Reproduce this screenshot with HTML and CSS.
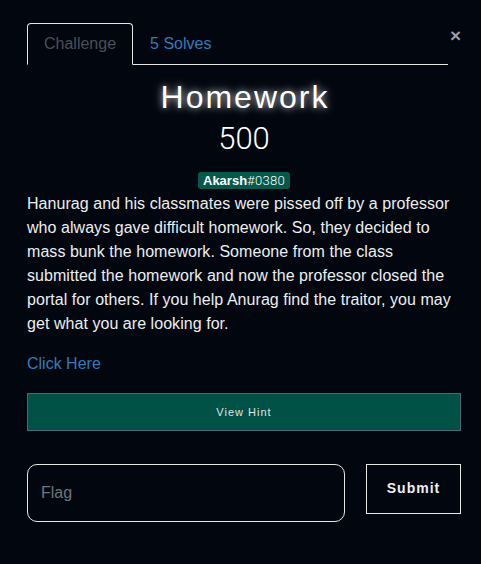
FILE: index.html
```html
<!DOCTYPE html>
<html>
<head>
<meta charset="utf-8">
<link rel="stylesheet" href="styles.css">
</head>
<body>
<div class="modal">
  <div class="head">
    <ul class="tabs">
      <li class="tab active">Challenge</li>
      <li class="tab link">5 Solves</li>
    </ul>
    <span class="close">×</span>
  </div>
  <h3 class="name">Homework</h3>
  <h4 class="value">500</h4>
  <div class="tags"><span class="badge"><b>Akarsh</b><span class="disc">#0380</span></span></div>
  <p class="desc">Hanurag and his classmates were pissed off by a professor who always gave difficult homework. So, they decided to mass bunk the homework. Someone from the class submitted the homework and now the professor closed the portal for others. If you help Anurag find the traitor, you may get what you are looking for.</p>
  <p class="more"><a class="click">Click Here</a></p>
  <div class="hint">View Hint</div>
  <div class="submit-row">
    <div class="flag">Flag</div>
    <div class="submit">Submit</div>
  </div>
</div>
</body>
</html>
```

FILE: styles.css
```css
html, body {
  margin: 0;
  padding: 0;
  background: #02070f;
  height: 100%;
}
body {
  font-family: "Liberation Sans", Arial, sans-serif;
  color: #e9ecef;
}
.modal {
  padding: 23px 20px 0 27px;
}
.head {
  display: flex;
  align-items: flex-start;
}
.tabs {
  flex: 1;
  display: flex;
  list-style: none;
  margin: 0 1px 0 0;
  padding: 0;
  border-bottom: 1px solid #e6e6e6;
}
.tab {
  font-size: 16px;
  line-height: 24px;
  padding: 8px 16px;
  margin-bottom: -1px;
  border: 1px solid transparent;
  border-radius: 4px 4px 0 0;
}
.tab.active {
  color: #495057;
  border-color: #e6e6e6 #e6e6e6 #02070f;
  background: #02070f;
}
.tab.link {
  color: #337ab7;
}
.close {
  width: 12px;
  font-size: 19px;
  font-weight: 700;
  line-height: 24px;
  color: #9a9ea3;
  text-align: right;
  padding-top: 1px;
}
.name {
  margin: 13px 0 0 0;
  padding-left: 2px;
  text-align: center;
  font-size: 32px;
  font-weight: 400;
  letter-spacing: 2px;
  line-height: 38px;
  color: #fff;
  text-shadow: 0 0 7px rgba(255,255,255,0.7), 0 0 14px rgba(255,255,255,0.3);
}
.value {
  margin: 4px 0 0 0;
  text-align: center;
  font-family: Roboto, sans-serif;
  font-weight: 300;
  font-size: 31px;
  line-height: 38px;
  color: #fff;
}
.tags {
  margin-top: 13px;
  text-align: center;
  line-height: 17px;
  height: 17px;
}
.badge {
  display: inline-block;
  background: #04594a;
  color: #fff;
  font-size: 13px;
  line-height: 17px;
  padding: 0 5px;
  border-radius: 3px;
}
.badge b {
  font-weight: 700;
}
.disc {
  font-family: Roboto, sans-serif;
  font-weight: 300;
  letter-spacing: 0.3px;
}
.desc {
  margin: 4px 0 16px 0;
  font-size: 16px;
  line-height: 24px;
  letter-spacing: 0.05px;
  color: #eceeef;
}
.more {
  margin: 0 0 17px 0;
  font-size: 16px;
  line-height: 24px;
}
.click {
  color: #337ab7;
}
.hint {
  height: 36px;
  border: 1px solid #4a6878;
  background: #005246;
  color: #dfe5e3;
  font-size: 11px;
  letter-spacing: 1px;
  line-height: 36px;
  text-align: center;
}
.submit-row {
  display: flex;
  align-items: flex-start;
  margin-top: 33px;
  gap: 21px;
}
.flag {
  flex: 1;
  height: 56px;
  border: 1px solid #e6e6e6;
  border-radius: 10px;
  color: #6c757d;
  font-size: 16px;
  line-height: 56px;
  padding-left: 13px;
}
.submit {
  width: 93px;
  height: 48px;
  border: 1px solid #e6e6e6;
  color: #eee;
  font-weight: 700;
  font-size: 14px;
  letter-spacing: 1px;
  line-height: 46px;
  text-align: center;
}
```
